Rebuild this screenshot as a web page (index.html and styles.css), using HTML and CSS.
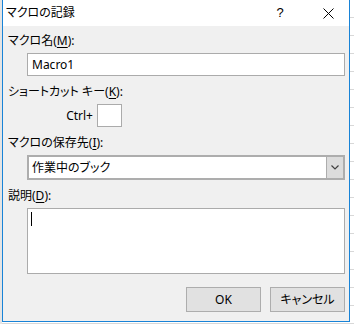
FILE: index.html
```html
<!DOCTYPE html>
<html lang="ja">
<head>
<meta charset="utf-8">
<link rel="stylesheet" href="styles.css">
</head>
<body>
<div class="dialog">
  <div class="titlebar">
    <span class="title">マクロの記録</span>
    <span class="help">?</span>
    <span class="close">
      <svg width="11" height="11" viewBox="0 0 11 11"><path d="M0.5 0.5L10.5 10.5M10.5 0.5L0.5 10.5" stroke="#000" stroke-width="1" fill="none"/></svg>
    </span>
  </div>
  <div class="content">
    <div class="label first">マクロ名(<u>M</u>):</div>
    <div class="field textbox">Macro1</div>
    <div class="label">ショートカット キー(<u>K</u>):</div>
    <div class="ctrlrow"><span class="ctrl">Ctrl+</span><span class="keybox"></span></div>
    <div class="label">マクロの保存先(<u>I</u>):</div>
    <div class="select"><span class="value">作業中のブック</span><span class="drop"><svg width="8" height="5" viewBox="0 0 8 5"><path d="M0.5 0.5L4 4L7.5 0.5" stroke="#404040" stroke-width="1.2" fill="none"/></svg></span></div>
    <div class="label">説明(<u>D</u>):</div>
    <div class="field memo"><span class="caret"></span></div>
    <div class="buttons"><span class="btn">OK</span><span class="btn">キャンセル</span></div>
  </div>
</div>
</body>
</html>
```
FILE: styles.css
```css
html, body {
  margin: 0;
  padding: 0;
}
body {
  width: 354px;
  height: 324px;
  overflow: hidden;
  background-color: #ffffff;
  background-image:
    linear-gradient(to right, #e4e4e4 0, #e4e4e4 2px, transparent 2px),
    repeating-linear-gradient(to bottom, transparent 0, transparent 17px, #d8d8d8 17px, #d8d8d8 18px);
  font-family: "Noto Sans", "Noto Sans CJK JP", sans-serif;
  font-size: 12px;
  color: #000;
  font-feature-settings: "palt";
}
.dialog {
  margin-left: 2px;
  width: 346px;
  height: 321px;
  border: 1px solid #1883d7;
  border-top: 0;
  background: #f0f0f0;
  display: flex;
  flex-direction: column;
}
.titlebar {
  height: 26px;
  background: #fff;
  display: flex;
  align-items: center;
  flex-shrink: 0;
}
.title {
  padding-left: 3px;
  line-height: 16px;
  flex: 1;
  font-size: 12px;
}
.help {
  width: 16px;
  text-align: center;
  font-family: "Liberation Sans", sans-serif;
  font-size: 13px;
  line-height: 16px;
  margin-right: 35px;
}
.close {
  display: flex;
  width: 12px;
  margin-right: 14px;
}
.content {
  padding: 0 4px 0 5px;
  display: flex;
  flex-direction: column;
}
.label {
  line-height: 16px;
  height: 16px;
  margin-top: 8px;
  white-space: nowrap;
}
.label.first {
  margin-top: 7px;
}
.label u {
  text-decoration-thickness: 1px;
  text-underline-offset: 2px;
}
.field {
  margin-left: 19px;
  box-sizing: border-box;
  background: #fff;
  border: 1px solid #ababab;
}
.textbox {
  margin-top: 4px;
  height: 23px;
  line-height: 21px;
  padding-left: 4px;
}
.ctrlrow {
  margin-top: 4px;
  height: 23px;
  display: flex;
  align-items: center;
}
.ctrl {
  width: 85px;
  text-align: right;
  line-height: 16px;
  margin-right: 4px;
}
.keybox {
  width: 25px;
  height: 23px;
  box-sizing: border-box;
  background: #fff;
  border: 1px solid #ababab;
}
.select {
  margin-top: 4px;
  margin-left: 19px;
  height: 25px;
  box-sizing: border-box;
  border: 2px solid #adadad;
  background: #fff;
  display: flex;
}
.select .value {
  flex: 1;
  line-height: 21px;
  padding-left: 3px;
}
.select .drop {
  width: 16px;
  background: #dcdcdc;
  border-left: 1px solid #adadad;
  display: flex;
  align-items: center;
  justify-content: center;
}
.memo {
  margin-top: 4px;
  height: 66px;
  padding: 3px 0 0 3px;
}
.caret {
  display: block;
  width: 1px;
  height: 14px;
  background: #000;
}
.buttons {
  margin-top: 13px;
  display: flex;
  justify-content: flex-end;
  gap: 9px;
}
.btn {
  width: 75px;
  height: 25px;
  box-sizing: border-box;
  background: #e1e1e1;
  border: 1px solid #adadad;
  display: flex;
  align-items: center;
  justify-content: center;
  line-height: 16px;
}
```
